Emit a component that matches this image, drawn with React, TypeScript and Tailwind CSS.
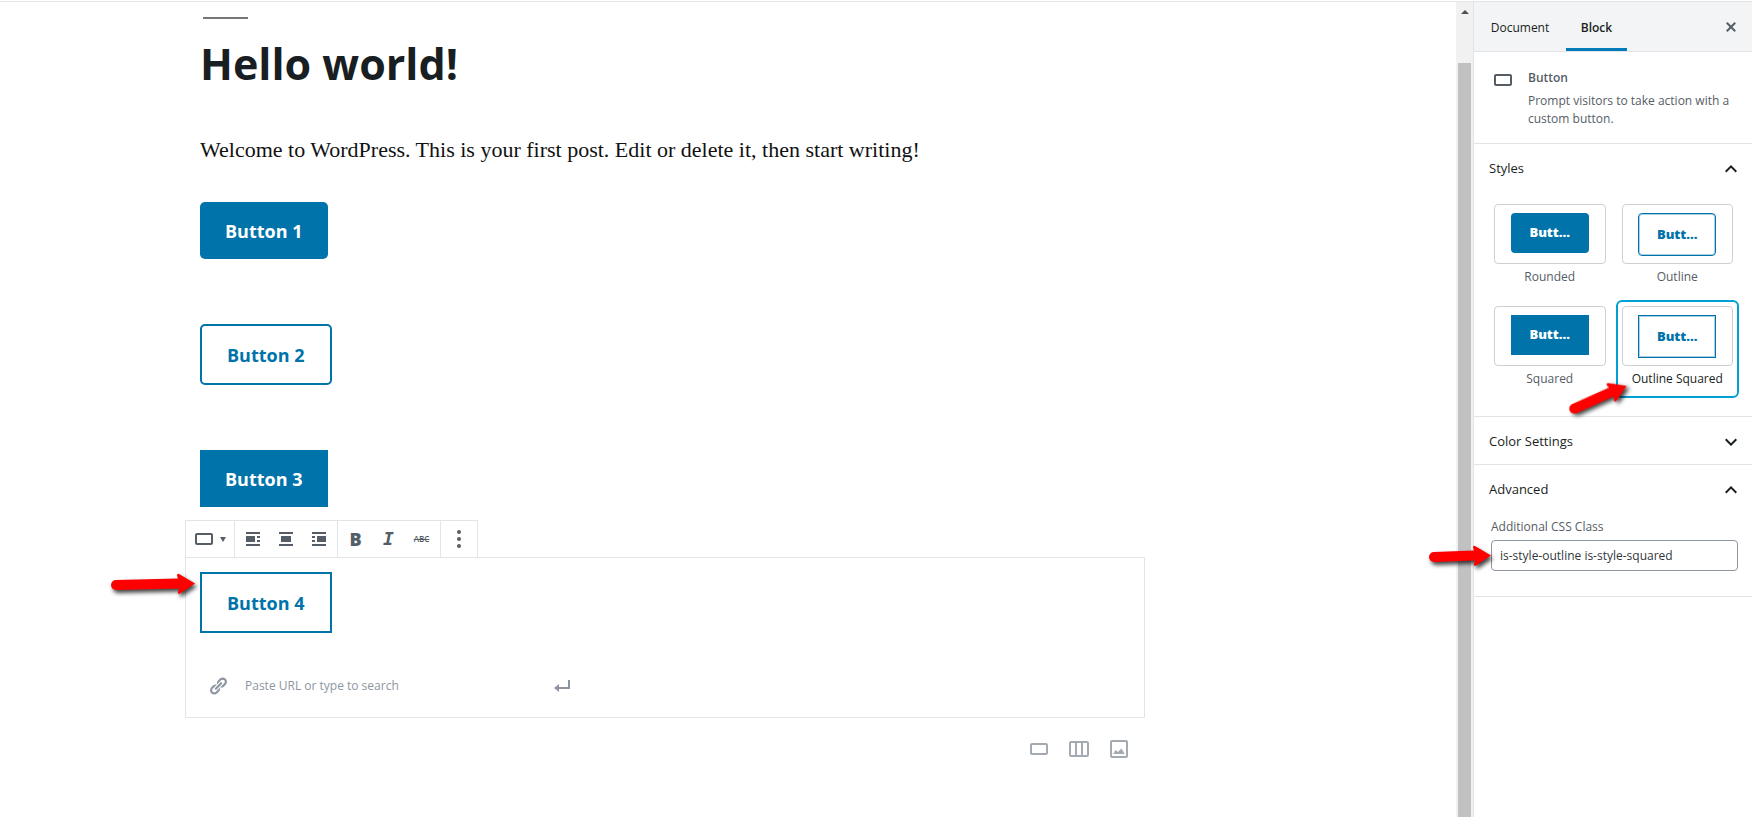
import React from "react";

type IconProps = { d: string; size?: 20 | 24; className?: string };

function Icon({ d, size = 20, className = "" }: IconProps) {
  return (
    <svg
      viewBox={size === 20 ? "0 0 20 20" : "0 0 24 24"}
      className={`${size === 20 ? "size-5" : "size-6"} shrink-0 fill-current ${className}`}
      aria-hidden="true"
    >
      <path fillRule="evenodd" d={d} />
    </svg>
  );
}

const icons = {
  button:
    "M19 6H5c-1.1 0-2 .9-2 2v8c0 1.1.9 2 2 2h14c1.1 0 2-.9 2-2V8c0-1.1-.9-2-2-2zm0 10H5V8h14v8z",
  alignLeft:
    "M3 5h14V3H3v2zm9 8V7H3v6h9zm2-4h3V7h-3v2zm0 4h3v-2h-3v2zM3 17h14v-2H3v2z",
  alignCenter: "M3 5h14V3H3v2zm12 8V7H5v6h10zM3 17h14v-2H3v2z",
  alignRight:
    "M3 5h14V3H3v2zm0 4h3V7H3v2zm14 4V7H8v6h9zM3 13h3v-2H3v2zm0 4h14v-2H3v2z",
  more: "M10 1a2 2 0 1 0 0 4 2 2 0 0 0 0-4zm0 7a2 2 0 1 0 0 4 2 2 0 0 0 0-4zm0 7a2 2 0 1 0 0 4 2 2 0 0 0 0-4z",
  link: "M17.74 2.76c1.68 1.69 1.68 4.41 0 6.1l-1.53 1.52c-1.12 1.12-2.7 1.47-4.14 1.09l2.62-2.61.76-.77.76-.76c.84-.84.84-2.2 0-3.04-.84-.85-2.2-.85-3.04 0l-.77.76-3.38 3.38c-.37-1.44-.02-3.02 1.1-4.14l1.52-1.53c1.69-1.68 4.42-1.68 6.1 0zM8.59 13.43l5.34-5.34c.42-.42.42-1.1 0-1.52-.44-.43-1.13-.39-1.53 0l-5.33 5.34c-.42.42-.42 1.1 0 1.52.44.43 1.13.39 1.52 0zm-.76 2.29l4.14-4.15c.38 1.44.03 3.02-1.09 4.14l-1.52 1.53c-1.69 1.68-4.41 1.68-6.1 0-1.68-1.68-1.68-4.42 0-6.1l1.53-1.52c1.12-1.12 2.7-1.47 4.14-1.1l-4.14 4.15c-.85.84-.85 2.2 0 3.05.84.84 2.2.84 3.04 0z",
  enter: "M16 4h2v9H7v3l-5-4 5-4v3h9V4z",
  columns:
    "M4 4h16a2 2 0 0 1 2 2v12a2 2 0 0 1-2 2H4a2 2 0 0 1-2-2V6a2 2 0 0 1 2-2zM4 6v12h4V6zm6 0v12h4V6zm6 0v12h4V6z",
  image:
    "M19 3H5c-1.1 0-2 .9-2 2v14c0 1.1.9 2 2 2h14c1.1 0 2-.9 2-2V5c0-1.1-.9-2-2-2zm0 16H5V5h14v14zM6.300 17l2.200-4 2.500 2 3.300-3.500 1.700 2.500 1.700 3z",
  close:
    "M14.95 6.46L11.41 10l3.54 3.54-1.41 1.41L10 11.42l-3.53 3.53-1.42-1.42L8.58 10 5.05 6.47l1.42-1.42L10 8.58l3.54-3.53z",
  up: "M12 8l-6 6 1.41 1.41L12 10.83l4.59 4.58L18 14z",
  down: "M7.41 8.59L12 13.17l4.59-4.58L18 10l-6 6-6-6z",
};

function Arrow({ short, className }: { short?: boolean; className: string }) {
  return (
    <svg
      viewBox={short ? "0 0 64 28" : "0 0 86 28"}
      className={`pointer-events-none absolute h-7 overflow-visible ${short ? "w-16" : "w-[86px]"} ${className}`}
      aria-hidden="true"
    >
      <path
        className="fill-[#fe0000] drop-shadow-[2px_3px_2px_rgba(0,0,0,0.75)]"
        d={
          short
            ? "M6 10L46 8.500L45 5.500Q45 3 47 4L63 13.500L48 23.500Q45.500 24.500 46 22L47 18.500L6 20A5 5 0 0 1 6 10Z"
            : "M6 10L68 8.500L67 5.500Q67 3 69 4L85 13.500L70 23.500Q67.500 24.500 68 22L69 18.500L6 20A5 5 0 0 1 6 10Z"
        }
      />
    </svg>
  );
}

function BlockButton({ label, outline, squared }: { label: string; outline?: boolean; squared?: boolean }) {
  return (
    <button
      type="button"
      className={`block px-[25px] pt-4 pb-[14px] text-[18px] leading-[27px] font-bold ${
        outline ? "border-2 border-[#0073aa] bg-white text-[#0073aa]" : "bg-[#0073aa] text-white"
      } ${squared ? "" : "rounded-[5px]"}`}
    >
      {label}
    </button>
  );
}

function ToolButton({ label, children }: { label: string; children: React.ReactNode }) {
  return (
    <button type="button" aria-label={label} className="flex h-9 w-[33px] items-center justify-center">
      {children}
    </button>
  );
}

function Toolbar() {
  return (
    <div className="flex h-[37px] w-fit divide-x divide-[#e2e4e7] border border-b-0 border-[#e2e4e7] bg-white text-[#555d66]">
      <button type="button" aria-label="Change block type" className="flex w-[49px] items-center pl-1.5">
        <Icon d={icons.button} size={24} />
        <svg viewBox="0 0 6 5" className="ml-1 h-[5px] w-1.5 fill-current" aria-hidden="true">
          <path d="M0 0h6L3 5z" />
        </svg>
      </button>
      <div className="flex pr-[2px] pl-px">
        <ToolButton label="Align left"><Icon d={icons.alignLeft} /></ToolButton>
        <ToolButton label="Align center"><Icon d={icons.alignCenter} /></ToolButton>
        <ToolButton label="Align right"><Icon d={icons.alignRight} /></ToolButton>
      </div>
      <div className="flex pr-[2px] pl-px">
        <button type="button" className="h-9 w-[33px] text-[18px] leading-9 font-extrabold">B</button>
        <button type="button" className="h-9 w-[33px] font-['DejaVu_Sans_Mono',monospace] text-[18px] leading-9 font-bold italic">I</button>
        <button type="button" className="h-9 w-[33px] text-[8px] leading-9 font-semibold line-through">ABC</button>
      </div>
      <button type="button" aria-label="More options" className="flex w-9 items-center justify-center">
        <Icon d={icons.more} />
      </button>
    </div>
  );
}

function Editor() {
  return (
    <main className="min-w-0 flex-1 bg-white pl-[185px]">
      <div className="max-w-[960px]">
        <div className="px-[15px] pt-[15px]">
          <div className="ml-[3px] h-0.5 w-[45px] bg-[#767676]" />
          <h1 className="mt-[15px] text-[43px] leading-[60px] font-bold text-[#191e23]">Hello world!</h1>
          <p className="mt-[38px] font-['Liberation_Serif',serif] text-[22px] leading-9 text-[#111]">
            Welcome to WordPress. This is your first post. Edit or delete it, then start writing!
          </p>
          <div className="mt-[34px] flex flex-col items-start gap-[65px]">
            <BlockButton label="Button 1" />
            <BlockButton label="Button 2" outline />
            <BlockButton label="Button 3" squared />
          </div>
        </div>
        <section aria-label="Selected block" className="mt-[13px]">
          <Toolbar />
          <div className="relative h-[161px] border border-[#e2e4e7] px-[14px] pt-[14px]">
            <BlockButton label="Button 4" outline squared />
            <form className="mt-[30px] flex h-[46px] w-[388px] items-center pl-2 text-[#8d96a0]">
              <Icon d={icons.link} />
              <input
                aria-label="Link"
                placeholder="Paste URL or type to search"
                className="ml-[17px] min-w-0 flex-1 text-[12px] outline-none placeholder:text-[#8d96a0]"
              />
              <button type="button" aria-label="Apply" className="mr-4"><Icon d={icons.enter} /></button>
            </form>
            <Arrow className="top-3 -left-[76px]" />
          </div>
        </section>
        <div className="mt-[19px] flex justify-end gap-4 pr-[14px] text-[#a4aab1]">
          <button type="button" aria-label="Add button"><Icon d={icons.button} size={24} /></button>
          <button type="button" aria-label="Add columns"><Icon d={icons.columns} size={24} /></button>
          <button type="button" aria-label="Add image"><Icon d={icons.image} size={24} /></button>
        </div>
      </div>
    </main>
  );
}

function StyleOption({ label, outline, squared, selected }: { label: string; outline?: boolean; squared?: boolean; selected?: boolean }) {
  return (
    <button
      type="button"
      aria-pressed={!!selected}
      className={`flex h-[98px] flex-col items-stretch justify-start rounded-md border-2 px-1 pt-1 text-[12px] ${
        selected ? "border-[#00a0d2] text-[#191e23]" : "border-transparent text-[#555d66]"
      }`}
    >
      <span className="flex h-[60px] items-start justify-center rounded border border-[#ccd0d4] pt-2">
        <span
          className={`flex w-[78px] items-center justify-center text-[13px] font-extrabold ${
            outline ? "h-[43px] border border-[#0073aa] text-[#0073aa] shadow-[inset_0_0_0_1px_#0073aa55]" : "h-10 bg-[#0073aa] text-white"
          } ${squared ? "" : "rounded"}`}
        >
          Butt...
        </span>
      </span>
      <span className="mt-[3px] block leading-5 whitespace-nowrap">{label}</span>
    </button>
  );
}

function PanelTitle({ label, open }: { label: string; open?: boolean }) {
  return (
    <h2>
      <button
        type="button"
        aria-expanded={!!open}
        className="flex h-12 w-full items-center justify-between pt-0.5 pr-[9px] pl-[15px] text-[13px] font-medium text-[#191e23]"
      >
        {label}
        <Icon d={open ? icons.up : icons.down} size={24} />
      </button>
    </h2>
  );
}

function Sidebar() {
  return (
    <aside className="w-[279px] shrink-0 border-l border-[#e2e4e7] bg-white">
      <div className="flex h-[50px] items-stretch border-b border-[#e2e4e7] bg-[#f3f4f5] text-[12px] text-[#191e23]">
        <button type="button" className="w-[92px] pt-0.5">Document</button>
        <button type="button" className="w-[61px] border-b-3 border-[#007cba] pt-[5px] font-semibold">Block</button>
        <button type="button" aria-label="Close settings" className="mr-[11px] ml-auto text-[#555d66]">
          <Icon d={icons.close} />
        </button>
      </div>
      <div className="flex h-[92px] border-b border-[#e2e4e7] pt-4 pl-[17px] text-[12px] text-[#555d66]">
        <Icon d={icons.button} size={24} />
        <div className="ml-[13px]">
          <h2 className="leading-[19px] font-semibold">Button</h2>
          <p className="mt-[5px] leading-[18px]">Prompt visitors to take action with a custom button.</p>
        </div>
      </div>
      <section className="h-[273px] border-b border-[#e2e4e7]">
        <PanelTitle label="Styles" open />
        <div className="mt-[6px] grid grid-cols-2 gap-x-1 gap-y-1 pr-[13px] pl-[14px]">
          <StyleOption label="Rounded" />
          <StyleOption label="Outline" outline />
          <StyleOption label="Squared" squared />
          <StyleOption label="Outline Squared" outline squared selected />
        </div>
        <div className="relative">
          <Arrow short className="-top-[14px] left-[92px] -rotate-22" />
        </div>
      </section>
      <section className="h-12 border-b border-[#e2e4e7]">
        <PanelTitle label="Color Settings" />
      </section>
      <section className="relative border-b border-[#e2e4e7] pb-[25px]">
        <PanelTitle label="Advanced" open />
        <div className="mt-1 pr-[14px] pl-[17px] text-[12px]">
          <label htmlFor="css-class" className="block leading-5 text-[#555d66]">Additional CSS Class</label>
          <input
            id="css-class"
            defaultValue="is-style-outline is-style-squared"
            className="mt-[3px] h-[31px] w-full rounded border border-[#8d96a0] bg-white px-2 text-[12px] text-[#32373c]"
          />
        </div>
        <Arrow short className="top-[77px] -left-[46px]" />
      </section>
    </aside>
  );
}

export default function App() {
  return (
    <div className="min-h-screen bg-white pt-px font-['Open_Sans','Noto_Sans',sans-serif]">
      <div className="flex min-h-[calc(100vh-1px)] border-t border-[#e2e4e7]">
        <Editor />
        <div className="flex w-[17px] shrink-0 flex-col bg-[#f1f1f1] px-0.5 pt-2" aria-hidden="true">
          <svg viewBox="0 0 8 4" className="mx-auto h-1 w-2 fill-[#505050]"><path d="M0 4l4-4 4 4z" /></svg>
          <div className="mt-[49px] flex-1 bg-[#c1c1c1]" />
        </div>
        <Sidebar />
      </div>
    </div>
  );
}
